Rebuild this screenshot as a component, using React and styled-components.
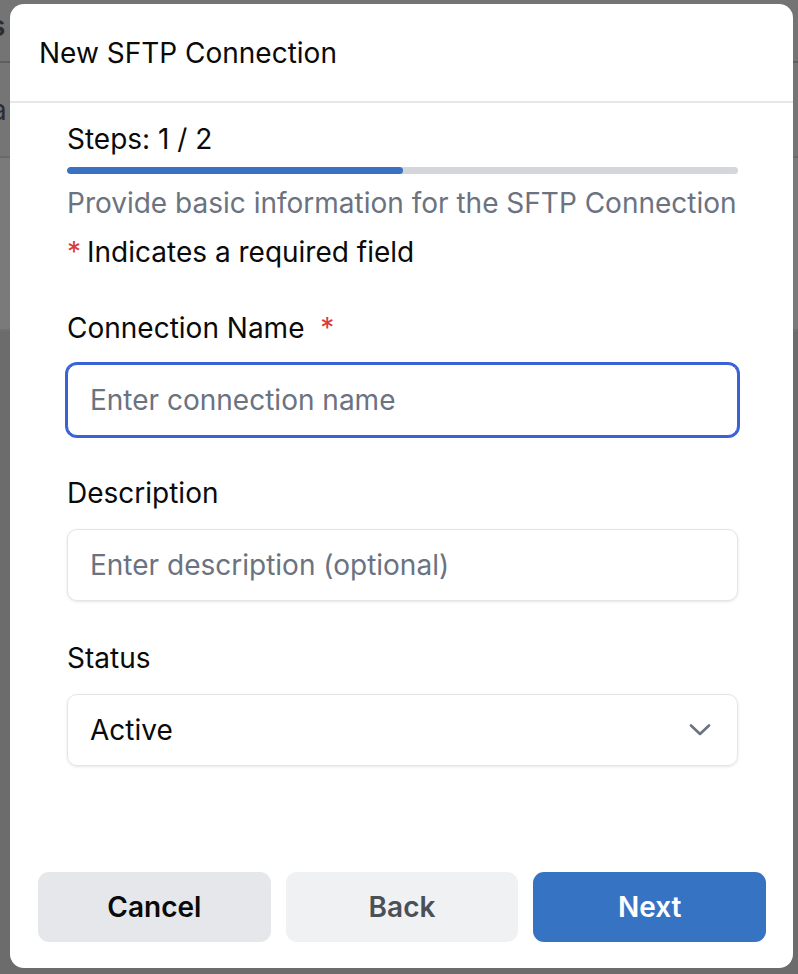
import React from "react";
import styled, { createGlobalStyle } from "styled-components";

const Global = createGlobalStyle`
  html, body { margin: 0; padding: 0; }
  body {
    font-family: Inter, "Noto Sans", "Liberation Sans", sans-serif;
    background: #6c6c6c;
    -webkit-font-smoothing: antialiased;
  }
  * { box-sizing: border-box; }
`;

const Page = styled.div`
  position: relative;
  width: 798px;
  height: 974px;
  overflow: hidden;
  display: flex;
  flex-direction: column;
  background: #6c6c6c;
`;

const BgBand = styled.div`
  height: ${(p) => p.$h}px;
  background: ${(p) => p.$bg};
  border-bottom: ${(p) => (p.$line ? `2px solid ${p.$line}` : "none")};
  display: flex;
  align-items: center;
  justify-content: flex-start;
  padding-bottom: ${(p) => p.$pb || 0}px;
  overflow: hidden;
`;

const BgText = styled.span`
  font-size: 28px;
  color: #2a2d33;
  font-weight: ${(p) => p.$w || 400};
  margin-left: ${(p) => p.$ml}px;
  white-space: nowrap;
`;

const Modal = styled.div`
  position: absolute;
  left: 10px;
  top: 4px;
  width: 783px;
  height: 964px;
  background: #ffffff;
  border-radius: 14px;
  display: flex;
  flex-direction: column;
  overflow: hidden;
`;

const Header = styled.div`
  height: 99px;
  flex-shrink: 0;
  display: flex;
  align-items: center;
  padding: 0 29px;
  border-bottom: 2px solid #e5e7eb;
`;

const Title = styled.h2`
  margin: 0;
  font-size: 28px;
  line-height: 34px;
  font-weight: 400;
  color: #0a0a0a;
`;

const Body = styled.div`
  flex: 1;
  padding: 19px 55px 0 57px;
  display: flex;
  flex-direction: column;
`;

const Text = styled.div`
  margin-top: ${(p) => p.$mt || 0}px;
  font-size: 28px;
  line-height: 34px;
  color: ${(p) => (p.$muted ? "#6b7280" : "#0a0a0a")};
`;

const Track = styled.div`
  margin-top: 11px;
  height: 7px;
  border-radius: 4px;
  background: #d4d6db;
  overflow: hidden;
`;

const Fill = styled.div`
  height: 100%;
  background: #3a71c1;
  border-radius: 4px;
`;

const Star = styled.span`
  color: #dc3b3b;
  margin-right: ${(p) => p.$mr || 0}px;
  margin-left: ${(p) => p.$ml || 0}px;
`;

const Field = styled.div`
  margin-top: ${(p) => p.$mt}px;
  display: flex;
  flex-direction: column;
`;

const Label = styled.label`
  font-size: 28px;
  line-height: 34px;
  color: #0a0a0a;
  margin-bottom: 19px;
`;

const Input = styled.input`
  height: 72px;
  width: 100%;
  border: 1px solid ${(p) => (p.$focus ? "#3a62d8" : "#e3e5e9")};
  box-shadow: ${(p) =>
    p.$focus ? "0 0 0 2px #3a62d8" : "0 1px 3px rgba(0,0,0,0.10)"};
  border-radius: 10px;
  padding: 0 22px;
  font-family: inherit;
  font-size: 28px;
  color: #111827;
  outline: none;
  background: #fff;
  &::placeholder { color: #6b7280; }
`;

const SelectBox = styled.div`
  height: 72px;
  border: 1px solid #e3e5e9;
  box-shadow: 0 1px 3px rgba(0,0,0,0.10);
  border-radius: 10px;
  padding: 0 26px 0 22px;
  display: flex;
  align-items: center;
  justify-content: space-between;
  font-size: 28px;
  color: #0a0a0a;
`;

const Footer = styled.div`
  flex-shrink: 0;
  padding: 0 27px 26px 28px;
  display: grid;
  grid-template-columns: repeat(3, 1fr);
  gap: 15px;
`;

const Button = styled.button`
  height: 70px;
  border: none;
  border-radius: 11px;
  font-family: inherit;
  font-size: 28px;
  font-weight: 600;
  background: ${(p) =>
    p.$variant === "primary" ? "#3773c3" : p.$variant === "muted" ? "#f0f1f3" : "#e5e7eb"};
  color: ${(p) =>
    p.$variant === "primary" ? "#ffffff" : p.$variant === "muted" ? "#4b4f57" : "#0a0a0a"};
`;

export default function App() {
  return (
    <>
      <Global />
      <Page>
        <BgBand $h={63} $pb={10} $bg="#747474" $line="#5e5e5e">
          <BgText $ml={-10} $w={600}>s</BgText>
        </BgBand>
        <BgBand $h={95} $bg="#757575" $line="#6a6a6a">
          <BgText $ml={-9}>a</BgText>
        </BgBand>
        <BgBand $h={173} $bg="#7a7a7a" $line="#717171" />
        <Modal>
          <Header>
            <Title>New SFTP Connection</Title>
          </Header>
          <Body>
            <Text>Steps: 1 / 2</Text>
            <Track>
              <Fill style={{ width: "50%" }} />
            </Track>
            <Text $muted $mt={12}>
              Provide basic information for the SFTP Connection
            </Text>
            <Text $mt={15}>
              <Star $mr={6}>*</Star>Indicates a required field
            </Text>
            <Field $mt={42}>
              <Label>
                Connection Name <Star $ml={8}>*</Star>
              </Label>
              <Input $focus placeholder="Enter connection name" />
            </Field>
            <Field $mt={40}>
              <Label>Description</Label>
              <Input placeholder="Enter description (optional)" />
            </Field>
            <Field $mt={40}>
              <Label>Status</Label>
              <SelectBox>
                <span>Active</span>
                <svg width="22" height="14" viewBox="0 0 22 14" fill="none">
                  <path
                    d="M2 2.5 L11 11 L20 2.5"
                    stroke="#6b7280"
                    strokeWidth="2.6"
                    strokeLinecap="round"
                    strokeLinejoin="round"
                  />
                </svg>
              </SelectBox>
            </Field>
          </Body>
          <Footer>
            <Button>Cancel</Button>
            <Button $variant="muted">Back</Button>
            <Button $variant="primary">Next</Button>
          </Footer>
        </Modal>
      </Page>
    </>
  );
}
